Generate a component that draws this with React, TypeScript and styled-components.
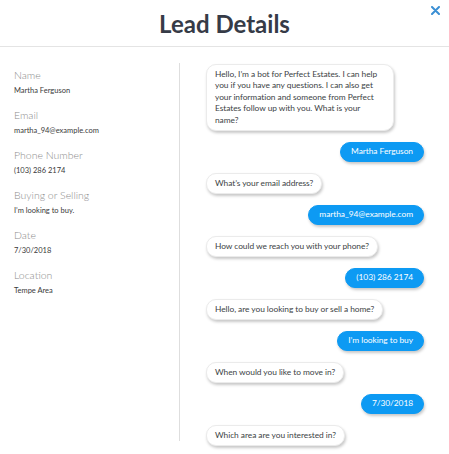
import { styled, createGlobalStyle } from 'styled-components';

const GlobalStyle = createGlobalStyle`
  html, body {
    margin: 0;
    padding: 0;
    background: #ffffff;
  }
  body {
    font-family: Lato, "Open Sans", sans-serif;
    -webkit-font-smoothing: antialiased;
  }
`;

const fields = [
  { label: 'Name', value: 'Martha Ferguson' },
  { label: 'Email', value: 'martha_94@example.com' },
  { label: 'Phone Number', value: '(103) 286 2174' },
  { label: 'Buying or Selling', value: 'I’m looking to buy.' },
  { label: 'Date', value: '7/30/2018' },
  { label: 'Location', value: 'Tempe Area' },
];

const messages: { from: 'bot' | 'user'; text: string }[] = [
  {
    from: 'bot',
    text: 'Hello, I’m a bot for Perfect Estates. I can help you if you have any questions. I can also get your information and someone from Perfect Estates follow up with you. What is your name?',
  },
  { from: 'user', text: 'Martha Ferguson' },
  { from: 'bot', text: 'What’s your email address?' },
  { from: 'user', text: 'martha_94@example.com' },
  { from: 'bot', text: 'How could we reach you with your phone?' },
  { from: 'user', text: '(103) 286 2174' },
  { from: 'bot', text: 'Hello, are you looking to buy or sell a home?' },
  { from: 'user', text: 'I’m looking to buy' },
  { from: 'bot', text: 'When would you like to move in?' },
  { from: 'user', text: '7/30/2018' },
  { from: 'bot', text: 'Which area are you interested in?' },
];

const App = () => {
  return (
    <>
      <GlobalStyle />
      <Modal>
        <Header>
          <Title>Lead Details</Title>
          <CloseButton aria-label="Close">
            <svg width="9" height="9" viewBox="0 0 9 9">
              <path d="M1 1 L8 8 M8 1 L1 8" stroke="#3b8fd4" strokeWidth="2" strokeLinecap="round" />
            </svg>
          </CloseButton>
        </Header>
        <Body>
          <Sidebar>
            {fields.map((f) => (
              <Field key={f.label}>
                <Label>{f.label}</Label>
                <Value>{f.value}</Value>
              </Field>
            ))}
          </Sidebar>
          <Chat>
            {messages.map((m, i) => (
              <Bubble key={i} $from={m.from}>
                {m.text}
              </Bubble>
            ))}
          </Chat>
        </Body>
      </Modal>
    </>
  );
};

export default App;

const Modal = styled.div`
  width: 449px;
  height: 454px;
  background: #ffffff;
  overflow: hidden;
  display: flex;
  flex-direction: column;
`;

const Header = styled.header`
  position: relative;
  flex-shrink: 0;
  height: 46px;
  border-bottom: 1px solid #e4e4e4;
  display: flex;
  align-items: center;
  justify-content: center;
`;

const Title = styled.h1`
  margin: 0;
  font-size: 24px;
  font-weight: 700;
  color: #363b47;
`;

const CloseButton = styled.button`
  position: absolute;
  top: 5px;
  right: 8px;
  padding: 0;
  border: none;
  background: none;
  width: 11px;
  height: 11px;
  display: flex;
  align-items: center;
  justify-content: center;
  cursor: pointer;
`;

const Body = styled.div`
  flex: 1;
  display: flex;
  align-items: flex-start;
  min-height: 0;
`;

const Sidebar = styled.aside`
  width: 165px;
  height: 372px;
  margin-top: 16px;
  padding: 6px 0 0 14px;
  border-right: 1px solid #dedede;
  display: flex;
  flex-direction: column;
`;

const Field = styled.div`
  height: 40px;
  display: flex;
  flex-direction: column;
  gap: 4px;
`;

const Label = styled.div`
  font-size: 10.5px;
  line-height: 13px;
  font-weight: 300;
  color: #8c8c8c;
`;

const Value = styled.div`
  font-size: 7.5px;
  line-height: 10px;
  color: #3a3a3a;
`;

const Chat = styled.section`
  flex: 1;
  padding: 17px 25px 0 26px;
  display: flex;
  flex-direction: column;
  align-items: flex-start;
  gap: 11px;
`;

const Bubble = styled.div<{ $from: 'bot' | 'user' }>`
  box-sizing: border-box;
  max-width: 188px;
  font-size: 8.4px;
  line-height: 11.5px;
  letter-spacing: -0.05px;
  padding: 3.5px ${(p) => (p.$from === 'bot' ? '8px' : '10px')};
  border-radius: 10px;
  align-self: ${(p) => (p.$from === 'bot' ? 'flex-start' : 'flex-end')};
  background: ${(p) => (p.$from === 'bot' ? '#ffffff' : '#0d9af3')};
  color: ${(p) => (p.$from === 'bot' ? '#3c3f45' : '#ffffff')};
  border: 1px solid ${(p) => (p.$from === 'bot' ? '#ebebeb' : '#0d9af3')};
  box-shadow: 1px 2px 3px rgba(0, 0, 0, 0.22);
`;
